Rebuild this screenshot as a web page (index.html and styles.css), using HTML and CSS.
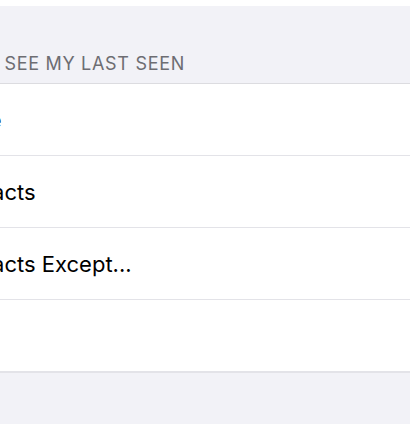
FILE: index.html
```html
<!DOCTYPE html>
<html lang="en">
<head>
<meta charset="utf-8">
<title>Last Seen</title>
<link rel="stylesheet" href="styles.css">
</head>
<body>
<div class="viewport">
  <div class="screen">
    <div class="section-header">WHO CAN SEE MY LAST SEEN</div>
    <ul class="list">
      <li class="row">Everyone</li>
      <li class="row">My Contacts</li>
      <li class="row">My Contacts Except...</li>
      <li class="row">Nobody</li>
    </ul>
    <div class="section-footer"></div>
  </div>
</div>
</body>
</html>
```
FILE: styles.css
```css
html, body {
  margin: 0;
  padding: 0;
  background: #ffffff;
}
.viewport {
  width: 410px;
  height: 430px;
  overflow: hidden;
  padding-top: 6px;
  box-sizing: border-box;
}
.screen {
  margin-left: -110px;
  width: 520px;
  font-family: Inter, "Liberation Sans", sans-serif;
}
.section-header {
  background: #f2f2f7;
  height: 78px;
  box-sizing: border-box;
  padding-left: 15px;
  padding-bottom: 9px;
  display: flex;
  align-items: flex-end;
  font-size: 18px;
  line-height: 20px;
  color: #6d6d72;
  letter-spacing: 0.7px;
  white-space: nowrap;
  border-bottom: 1px solid #dcdce0;
}
.list {
  list-style: none;
  margin: 0;
  padding: 0;
  background: #ffffff;
}
.row {
  height: 71px;
  display: flex;
  align-items: center;
  padding-left: 14px;
  font-size: 22px;
  color: #000000;
  white-space: nowrap;
  border-bottom: 1px solid #e3e3e8;
}
.row:last-child {
  border-bottom: 2px solid #e3e3e8;
}
.section-footer {
  background: #f2f2f7;
  height: 51px;
}
```
